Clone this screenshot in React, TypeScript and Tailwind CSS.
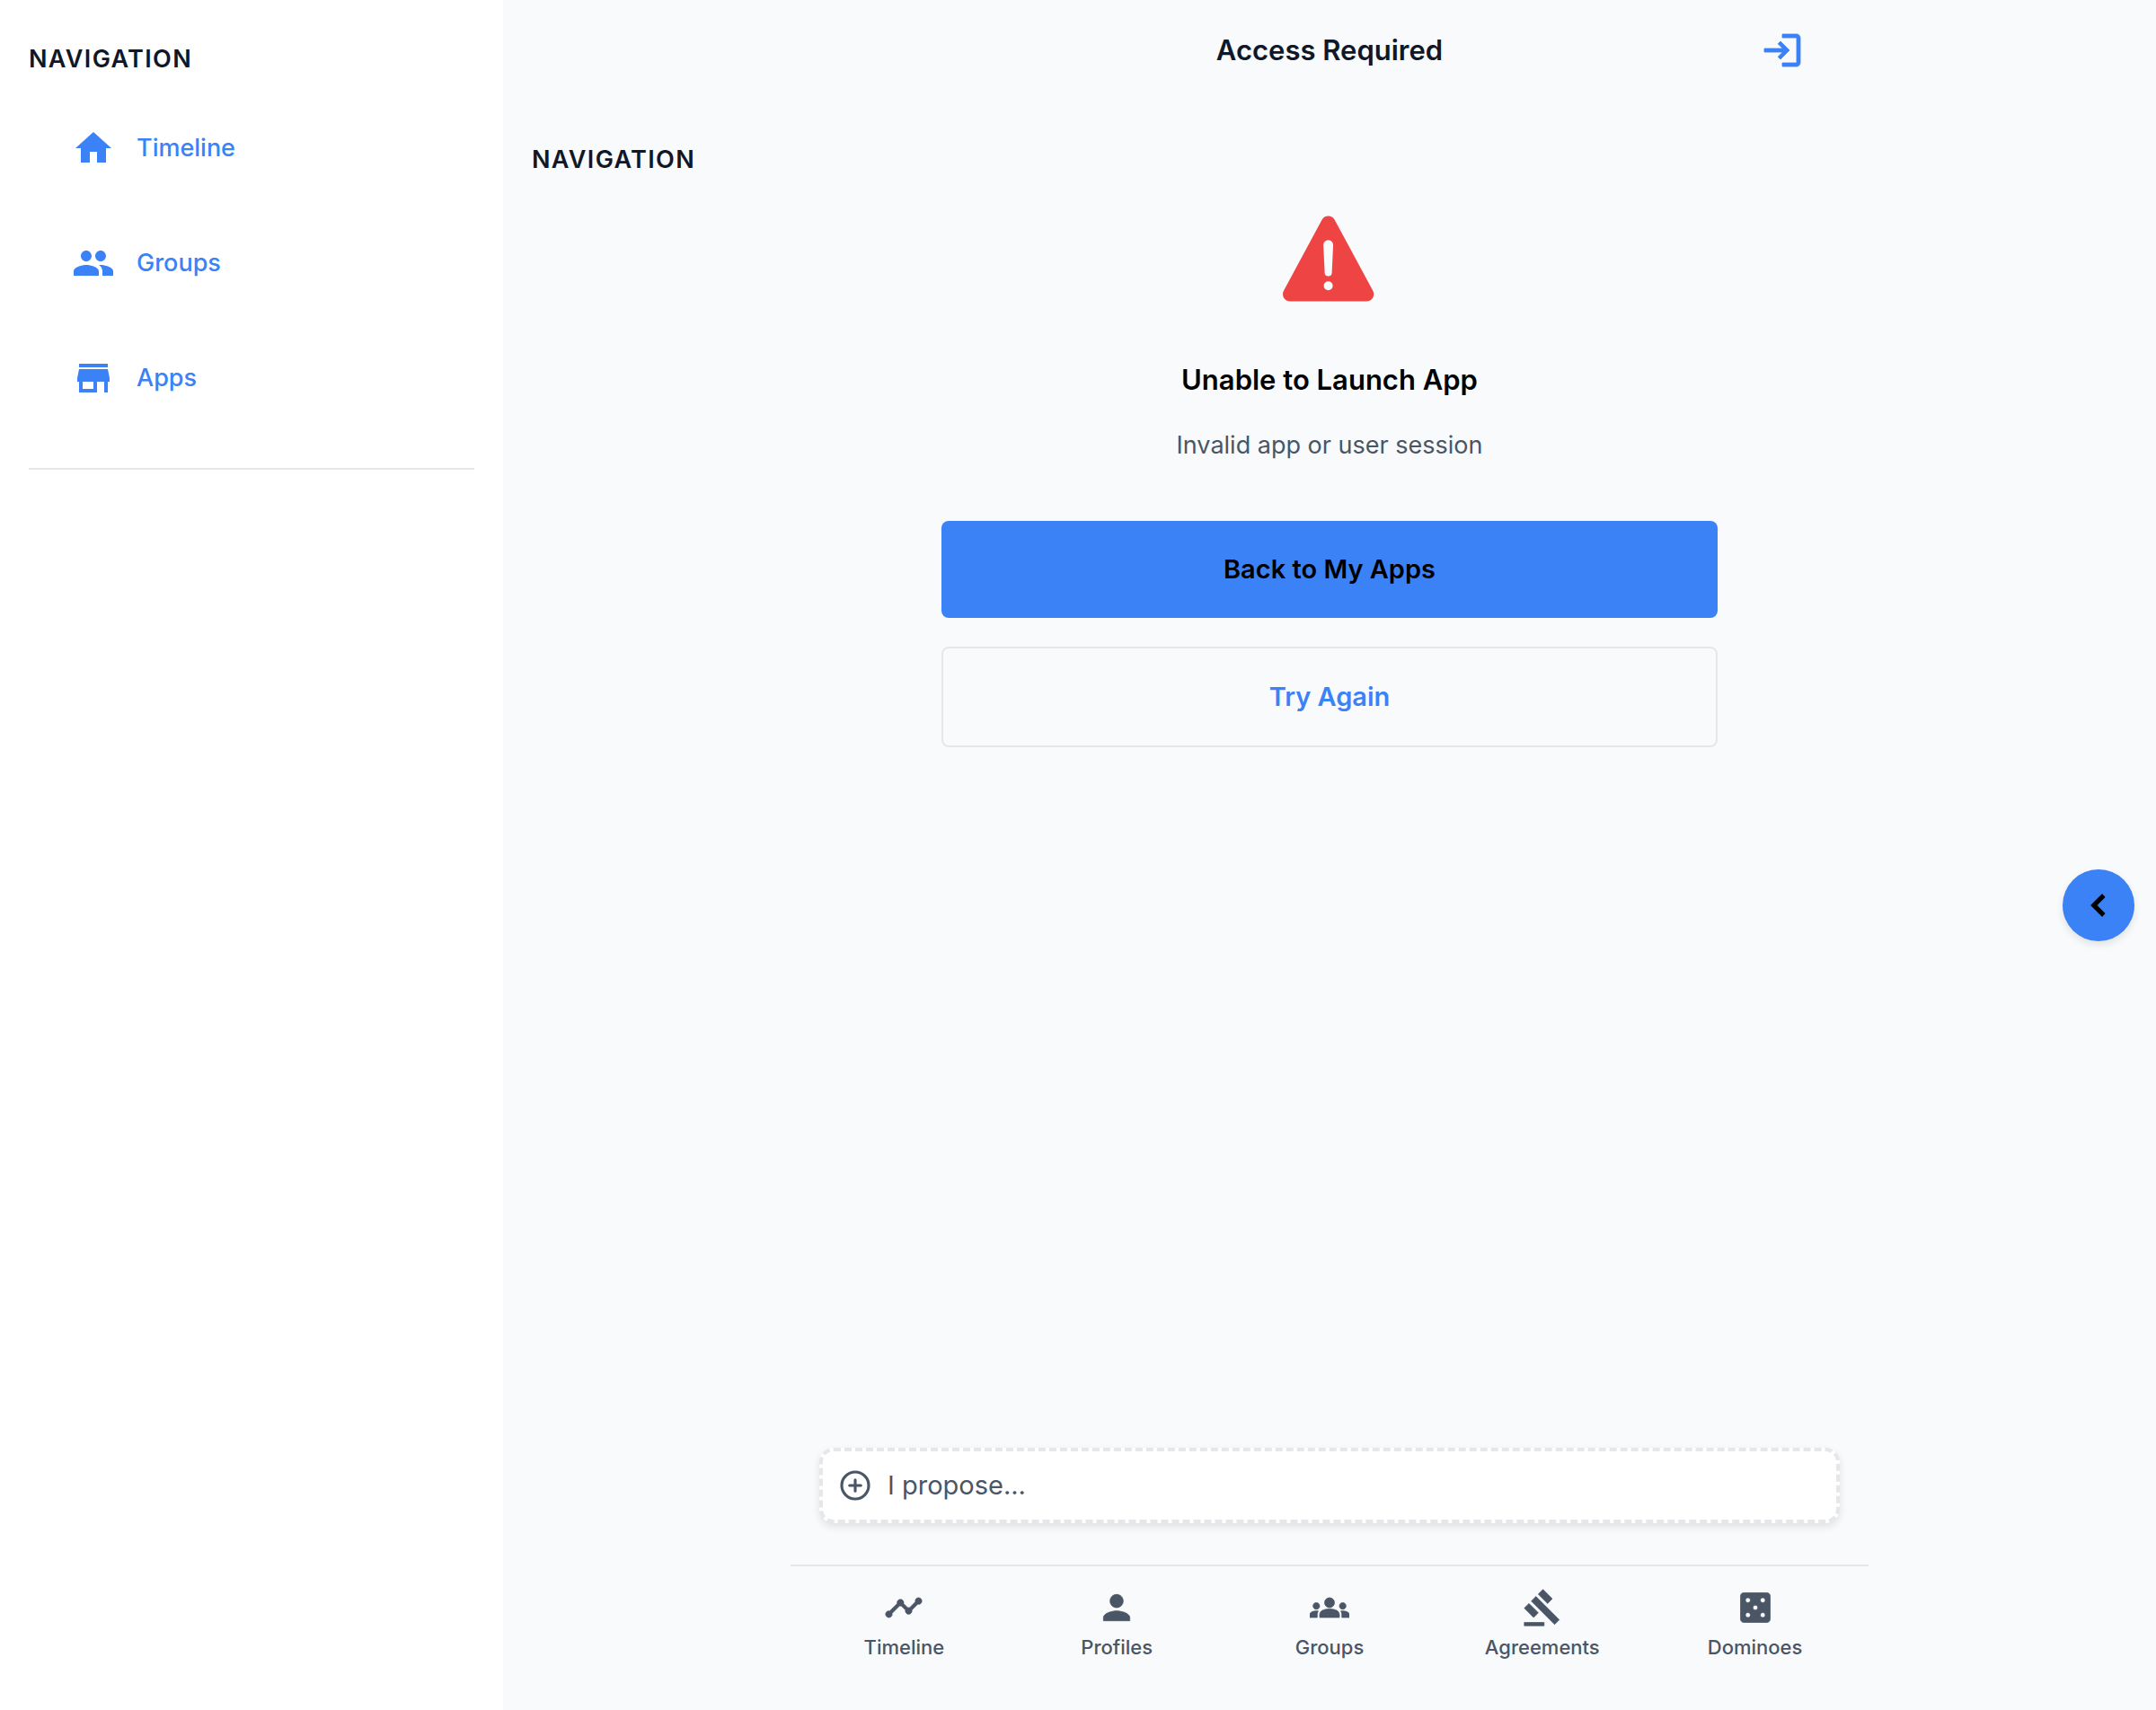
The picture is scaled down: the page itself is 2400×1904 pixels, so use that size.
import type { IconType } from "react-icons";
import { IoAddCircleOutline, IoWarning } from "react-icons/io5";
import {
  MdCasino,
  MdChevronLeft,
  MdGavel,
  MdGroups,
  MdHome,
  MdLogin,
  MdPeople,
  MdPerson,
  MdStore,
  MdTimeline,
} from "react-icons/md";

type Item = { label: string; Icon: IconType };

const sideItems: Item[] = [
  { label: "Timeline", Icon: MdHome },
  { label: "Groups", Icon: MdPeople },
  { label: "Apps", Icon: MdStore },
];

const tabs: Item[] = [
  { label: "Timeline", Icon: MdTimeline },
  { label: "Profiles", Icon: MdPerson },
  { label: "Groups", Icon: MdGroups },
  { label: "Agreements", Icon: MdGavel },
  { label: "Dominoes", Icon: MdCasino },
];

function SectionTitle() {
  return (
    <h2 className="text-[27px] leading-9 font-semibold tracking-wider text-gray-900 uppercase">
      Navigation
    </h2>
  );
}

function Sidebar() {
  return (
    <aside className="w-[560px] shrink-0 bg-white px-8 pt-12">
      <SectionTitle />
      <nav className="mt-[17px] flex flex-col border-b-2 border-gray-200 pb-9">
        {sideItems.map(({ label, Icon }) => (
          <a
            key={label}
            href="#"
            className="flex h-32 items-center gap-6 px-12 text-[27px] leading-9 font-medium text-[#3b82f6]"
          >
            <Icon className="size-12" aria-hidden="true" />
            {label}
          </a>
        ))}
      </nav>
    </aside>
  );
}

function LaunchError() {
  return (
    <section className="mx-auto flex w-[72%] flex-col items-center text-center">
      <IoWarning className="size-32 text-[#ef4444]" aria-hidden="true" />
      <h2 className="mt-12 text-[31px] leading-[46px] font-semibold text-black">Unable to Launch App</h2>
      <p className="mt-[30px] text-[27px] leading-10 text-gray-600">Invalid app or user session</p>
      <button
        type="button"
        className="mt-16 h-[108px] w-full rounded-lg bg-[#3b82f6] text-[29px] font-semibold text-black"
      >
        Back to My Apps
      </button>
      <button
        type="button"
        className="mt-8 h-28 w-full rounded-lg border-2 border-gray-200 text-[29px] font-semibold text-[#3b82f6]"
      >
        Try Again
      </button>
    </section>
  );
}

function ProposeBox() {
  return (
    <div className="px-8 pb-[46px]">
      <label className="flex h-[84px] items-center gap-4 rounded-2xl border-4 border-dashed border-gray-200 bg-white px-4 text-gray-600 shadow-[0_4px_8px_rgba(0,0,0,0.1)]">
        <IoAddCircleOutline className="size-10 shrink-0 [&>*]:[stroke-width:40px]" aria-hidden="true" />
        <input
          type="text"
          aria-label="Proposal"
          placeholder="I propose..."
          className="min-w-0 flex-1 bg-transparent text-[29px] outline-none placeholder:text-gray-600 placeholder:opacity-100"
        />
      </label>
    </div>
  );
}

function TabBar() {
  return (
    <nav className="flex h-[162px] border-t-2 border-gray-200 px-2 pt-6">
      {tabs.map(({ label, Icon }) => (
        <a
          key={label}
          href="#"
          className="flex flex-1 flex-col items-center gap-2 text-[22px] leading-7 font-medium text-gray-600"
        >
          <Icon className="size-11 [&>:not([fill=none])]:[stroke-width:0.4]" aria-hidden="true" />
          {label}
        </a>
      ))}
    </nav>
  );
}

export default function App() {
  return (
    <div className="flex min-h-screen bg-gray-50 font-['Inter',sans-serif]">
      <Sidebar />
      <main className="relative flex min-w-0 flex-1 flex-col">
        <header className="mx-auto grid h-28 w-full max-w-[1200px] grid-cols-[1fr_auto_1fr] items-center px-[72px]">
          <h1 className="col-start-2 text-[31px] leading-10 font-semibold text-gray-900">Access Required</h1>
          <button type="button" aria-label="Log in" className="justify-self-end text-[#3b82f6]">
            <MdLogin className="size-12 [&>:not([fill=none])]:[stroke-width:0.4]" />
          </button>
        </header>
        <div className="px-8 pt-12">
          <SectionTitle />
        </div>
        <div className="mx-auto mt-7 flex w-full max-w-[1200px] flex-1 flex-col">
          <LaunchError />
          <div className="mt-auto">
            <ProposeBox />
            <TabBar />
          </div>
        </div>
        <button
          type="button"
          aria-label="Open panel"
          className="absolute right-6 top-[968px] flex size-20 items-center justify-center rounded-full bg-[#3b82f6] text-black shadow-[0_4px_8px_rgba(0,0,0,0.1)]"
        >
          <MdChevronLeft className="size-12 [stroke-linejoin:round] [&>:not([fill=none])]:[stroke-width:0.6]" />
        </button>
      </main>
    </div>
  );
}
